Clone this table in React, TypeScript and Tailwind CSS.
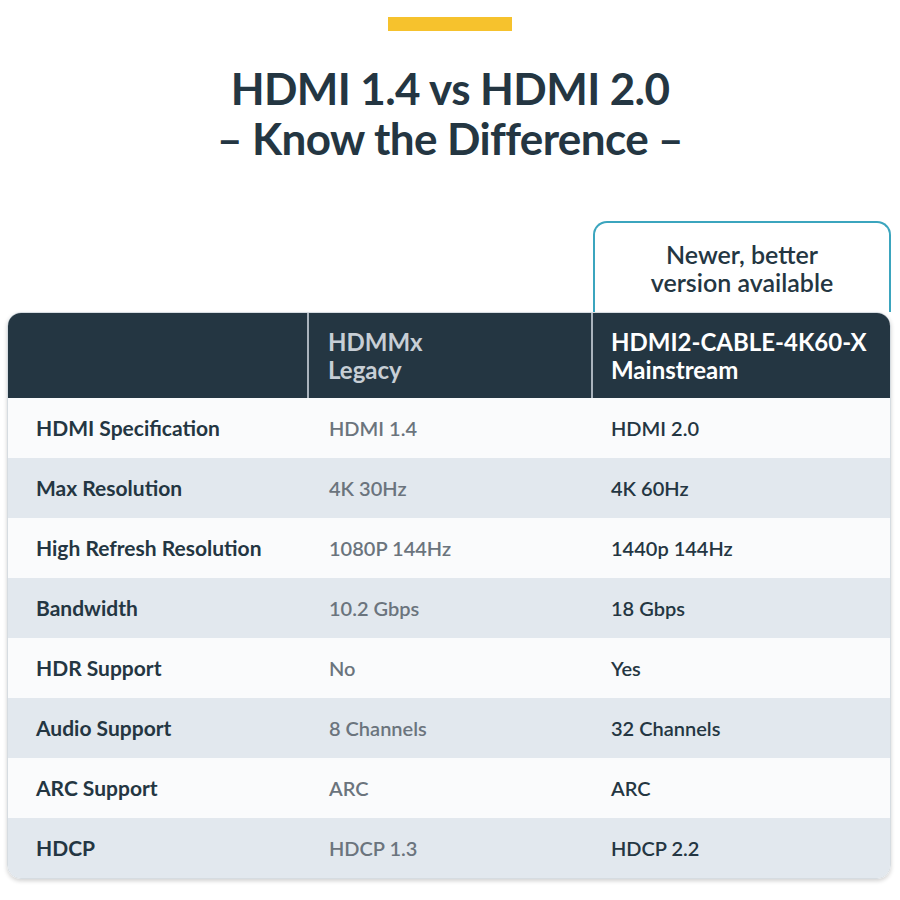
import React from 'react';

interface SpecRow {
    label: string;
    legacy: string;
    mainstream: string;
}

const rows: SpecRow[] = [
    { label: 'HDMI Specification', legacy: 'HDMI 1.4', mainstream: 'HDMI 2.0' },
    { label: 'Max Resolution', legacy: '4K 30Hz', mainstream: '4K 60Hz' },
    { label: 'High Refresh Resolution', legacy: '1080P 144Hz', mainstream: '1440p 144Hz' },
    { label: 'Bandwidth', legacy: '10.2 Gbps', mainstream: '18 Gbps' },
    { label: 'HDR Support', legacy: 'No', mainstream: 'Yes' },
    { label: 'Audio Support', legacy: '8 Channels', mainstream: '32 Channels' },
    { label: 'ARC Support', legacy: 'ARC', mainstream: 'ARC' },
    { label: 'HDCP', legacy: 'HDCP 1.3', mainstream: 'HDCP 2.2' }
];

export default function App() {
    return (
        <div className="w-[900px] h-[900px] bg-white font-['Lato',sans-serif] text-[#243642]">
            <div className="flex justify-center pt-[17px]">
                <div className="w-[124px] h-[14px] bg-[#f6c22d]" />
            </div>

            <h1 className="mt-[32px] text-center text-[44px] leading-[50px] font-bold tracking-[-0.6px]">
                HDMI 1.4 vs HDMI 2.0
                <br />
                – Know the Difference –
            </h1>

            <div className="ml-[7px] mt-[58px] w-[884px]">
                {/* callout above the new column */}
                <div className="flex justify-end">
                    <div className="w-[298px] h-[91px] border-2 border-b-0 border-[#3ba5be] rounded-t-[14px] flex items-start justify-center pt-[17px]">
                        <p className="text-center text-[25px] leading-[28px] font-semibold">
                            Newer, better
                            <br />
                            version available
                        </p>
                    </div>
                </div>

                <div className="rounded-[14px] shadow-[0_2px_4px_rgba(0,0,0,0.18)] border border-[#d6dce1] overflow-hidden">
                    <div className="grid grid-cols-[301px_284px_297px] h-[85px] bg-[#243642] text-[24px] leading-[28px] font-bold">
                        <div className="border-r-2 border-[#aab4bd]" />
                        <div className="border-r-2 border-[#aab4bd] pl-[19px] pt-[15px] text-[#c7ced5]">
                            HDMMx
                            <br />
                            Legacy
                        </div>
                        <div className="pl-[18px] pt-[15px] text-white">
                            HDMI2-CABLE-4K60-X
                            <br />
                            Mainstream
                        </div>
                    </div>

                    {rows.map((row, i) => (
                        <div
                            key={row.label}
                            className={`grid grid-cols-[301px_284px_297px] h-[60px] items-center text-[20px] ${i % 2 === 0 ? 'bg-[#fafbfc]' : 'bg-[#e2e8ee]'}`}
                        >
                            <div className="pl-[28px] text-[21px] font-bold">{row.label}</div>
                            <div className="pl-[20px] font-semibold text-[#6b747d]">{row.legacy}</div>
                            <div className="pl-[18px] font-semibold">{row.mainstream}</div>
                        </div>
                    ))}
                </div>
            </div>
        </div>
    );
}
